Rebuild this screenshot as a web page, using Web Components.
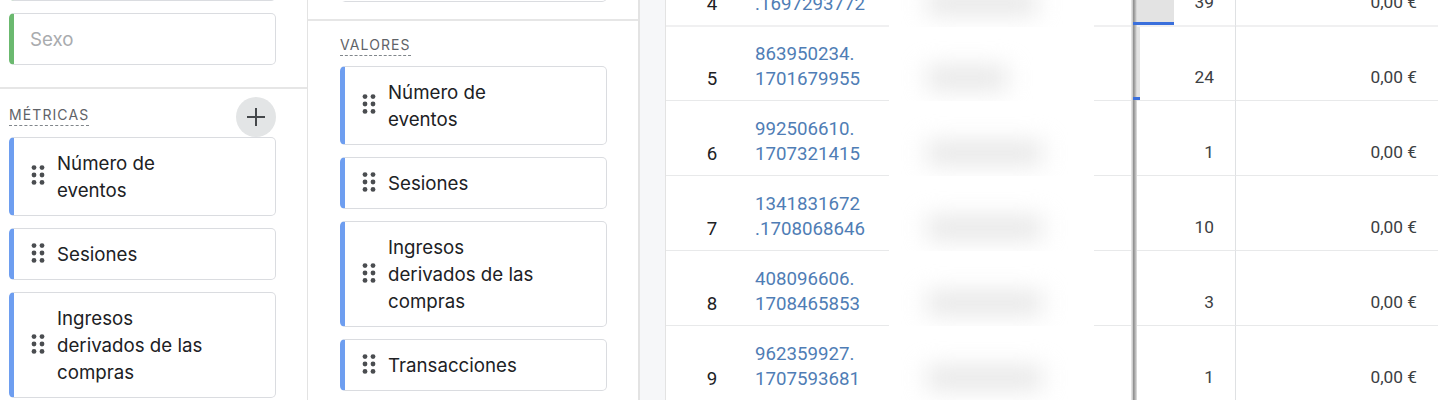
<!DOCTYPE html>
<html lang="es">
<head>
<meta charset="utf-8">
<title>Exploración</title>
<style>
  html, body { margin: 0; height: 400px; overflow: hidden; background: #fff; }
  body { font-family: "Roboto", "Liberation Sans", sans-serif; }
  .workspace { display: flex; height: 400px; overflow: hidden; }
  .clip-card { margin-top: -51px; }
  .clip-row { margin-top: -49px; }
</style>
</head>
<body>
<div class="workspace">
  <side-panel style="--panel-w:307px;--panel-pad:9px;--panel-border:1px">
    <field-card class="clip-card" accent="#6bb96f" muted no-grip></field-card>
    <field-card accent="#6bb96f" muted no-grip style="--card-mt:12px">Sexo</field-card>
    <panel-section style="--section-mt:22px" add>
      <span slot="label">MÉTRICAS</span>
      <field-card>Número de eventos</field-card>
      <field-card>Sesiones</field-card>
      <field-card>Ingresos derivados de las compras</field-card>
    </panel-section>
  </side-panel>
  <side-panel style="--panel-w:330px;--panel-pad:32px;--panel-border:2px">
    <field-card style="--card-mt:-50px" accent="#fff" no-grip></field-card>
    <panel-section style="--section-mt:17px">
      <span slot="label">VALORES</span>
      <field-card>Número de eventos</field-card>
      <field-card>Sesiones</field-card>
      <field-card>Ingresos derivados de las compras</field-card>
      <field-card>Transacciones</field-card>
    </panel-section>
  </side-panel>
  <report-table>
    <report-row class="clip-row" rank="4" events="39" bar="41" blur="110"><br>.1697293772</report-row>
    <report-row rank="5" events="24" bar="7" blur="80" thin>863950234.<br>1701679955</report-row>
    <report-row rank="6" events="1" blur="115" thin>992506610.<br>1707321415</report-row>
    <report-row rank="7" events="10" blur="115" thin>1341831672<br>.1708068646</report-row>
    <report-row rank="8" events="3" blur="115" thin>408096606.<br>1708465853</report-row>
    <report-row rank="9" events="1" blur="115" thin>962359927.<br>1707593681</report-row>
  </report-table>
</div>

<script>
// shared helper, every element gets an open shadow root from a string
function mount(el, html) {
    el.attachShadow({ mode: 'open' }).innerHTML = html;
}

class SidePanel extends HTMLElement {
    connectedCallback() {
        mount(this, `
            <style>
                :host {
                    display: block;
                    flex: none;
                    width: var(--panel-w);
                    height: 400px;
                    overflow: hidden;
                    border-right: var(--panel-border) solid #e3e3e3;
                    --pad: var(--panel-pad);
                }
                .inner { padding-left: var(--pad); width: 267px; }
            </style>
            <div class="inner"><slot></slot></div>
        `);
    }
}

class PanelSection extends HTMLElement {
    connectedCallback() {
        const add = this.hasAttribute('add');
        mount(this, `
            <style>
                :host {
                    display: block;
                    margin-top: var(--section-mt, 0);
                    margin-left: calc(var(--pad) * -1);
                    padding-left: var(--pad);
                    width: 340px;
                    border-top: 2px solid #e6e6e6;
                }
                .head, .body { width: 267px; }
                .head {
                    display: flex;
                    justify-content: space-between;
                    align-items: flex-end;
                    padding-top: ${add ? '8px' : '13px'};
                }
                .label {
                    font: 400 14px/21px "Inter", "Roboto", sans-serif;
                    letter-spacing: 1.1px;
                    color: #5f6368;
                    border-bottom: 1px dashed #80868b;
                    margin-bottom: ${add ? '11px' : '10px'};
                }
                .add {
                    width: 40px;
                    height: 40px;
                    border-radius: 50%;
                    background: #e3e5e6;
                    display: flex;
                    align-items: center;
                    justify-content: center;
                }
                .add svg { display: block; }
            </style>
            <div class="head">
                <span class="label"><slot name="label"></slot></span>
                ${add ? `<span class="add"><svg width="20" height="20" viewBox="0 0 20 20"><path d="M10 1v18M1 10h18" stroke="#45484b" stroke-width="2" fill="none"/></svg></span>` : ''}
            </div>
            <div class="body"><slot></slot></div>
        `);
    }
}

class FieldCard extends HTMLElement {
    connectedCallback() {
        const accent = this.getAttribute('accent') || '#6e9ef0';
        const noGrip = this.hasAttribute('no-grip');
        const grip = `<svg class="grip" width="14" height="20" viewBox="0 0 14 20">
            <g fill="#4a4d50"><circle cx="3" cy="2.6" r="2.4"/><circle cx="11" cy="2.6" r="2.4"/>
            <circle cx="3" cy="10" r="2.4"/><circle cx="11" cy="10" r="2.4"/>
            <circle cx="3" cy="17.4" r="2.4"/><circle cx="11" cy="17.4" r="2.4"/></g></svg>`;
        mount(this, `
            <style>
                :host {
                    display: block;
                    margin-top: var(--card-mt, 0);
                    margin-bottom: 12px;
                }
                .card {
                    box-sizing: border-box;
                    min-height: 52px;
                    display: flex;
                    align-items: center;
                    gap: 12px;
                    padding: 11.5px 0 11.5px ${noGrip ? '16px' : '17px'};
                    border: 1px solid #dadce0;
                    border-left: 5px solid ${accent};
                    border-radius: 5px;
                    background: #fff;
                }
                .grip { flex: none; margin-top: -3px; }
                .text {
                    width: 155px;
                    font: 400 18.7px/27px "Inter", "Roboto", sans-serif;
                    color: ${this.hasAttribute('muted') ? '#a9abae' : '#202124'};
                }
            </style>
            <div class="card">
                ${noGrip ? '' : grip}
                <span class="text"><slot></slot></span>
            </div>
        `);
    }
}

class ReportTable extends HTMLElement {
    connectedCallback() {
        mount(this, `
            <style>
                :host {
                    display: block;
                    flex: none;
                    width: 772px;
                    height: 400px;
                    margin-left: 26px;
                    overflow: hidden;
                    background: #fff;
                    box-shadow: -1px 0 0 #e3e3e3, -26px 0 0 #f6f7f9;
                }
            </style>
            <slot></slot>
        `);
    }
}

class ReportRow extends HTMLElement {
    connectedCallback() {
        const rank = this.getAttribute('rank');
        const events = this.getAttribute('events');
        const bar = parseInt(this.getAttribute('bar') || '0', 10);
        const blur = parseInt(this.getAttribute('blur') || '100', 10);
        const line = this.hasAttribute('thin') ? '1px solid #e8e9ea' : '2px solid #f0f0f1';
        mount(this, `
            <style>
                :host {
                    display: block;
                    height: 75px;
                    font: 400 17.3px/25px "Roboto", sans-serif;
                    color: #202124;
                }
                .row {
                    display: grid;
                    grid-template-columns: 89px 134px 205px 39px 103px 1fr;
                    height: 75px;
                }
                .cell {
                    box-sizing: border-box;
                    border-bottom: ${line};
                    display: flex;
                    align-items: flex-end;
                    padding-bottom: 8px;
                }
                .rank { justify-content: center; padding-left: 3px; font-size: 18.7px; }
                .id { color: #4f7db5; display: block; padding-top: 16px; font-size: 18.7px; }
                .masked { display: flex; align-items: center; padding: 28px 0 0 38px; overflow: hidden; }
                .masked i {
                    display: block;
                    height: 20px;
                    width: ${blur}px;
                    background: #e2e2e2;
                    filter: blur(12px);
                }
                .events {
                    position: relative;
                    justify-content: flex-end;
                    padding-right: 21px;
                    padding-bottom: 10px;
                    border-right: 1px solid #dfe1e3;
                    color: #3c4043;
                }
                /* frozen column shadow, sits over the grey bar but under the blue line */
                .events::before {
                    content: "";
                    position: absolute;
                    left: 0;
                    top: -1px;
                    bottom: -1px;
                    width: 4px;
                    z-index: 1;
                    background: linear-gradient(90deg, #8a8a8a, #a8a8a8 45%, #e4e4e4);
                }
                .events::after {
                    content: "";
                    position: absolute;
                    left: -2px;
                    top: -1px;
                    bottom: -1px;
                    width: 2px;
                    background: linear-gradient(90deg, #ececec, #c4c4c4);
                }
                .bar {
                    position: absolute;
                    left: 0;
                    bottom: 0;
                    width: ${bar}px;
                    height: 73px;
                    background: #e3e3e3;
                }
                .blue {
                    position: absolute;
                    left: 0;
                    bottom: 0;
                    width: ${bar}px;
                    height: 3px;
                    background: #3a6fdc;
                    z-index: 2;
                }
                .num { position: relative; z-index: 3; }
                .revenue {
                    justify-content: flex-end;
                    padding-right: 21px;
                    padding-bottom: 10px;
                    color: #3c4043;
                }
            </style>
            <div class="row">
                <div class="cell rank">${rank}</div>
                <div class="cell id"><slot></slot></div>
                <div class="masked"><i></i></div>
                <div class="cell"></div>
                <div class="cell events">${bar ? '<span class="bar"></span><span class="blue"></span>' : ''}<span class="num">${events}</span></div>
                <div class="cell revenue">0,00 €</div>
            </div>
        `);
    }
}

customElements.define('side-panel', SidePanel);
customElements.define('panel-section', PanelSection);
customElements.define('field-card', FieldCard);
customElements.define('report-table', ReportTable);
customElements.define('report-row', ReportRow);
</script>
</body>
</html>
